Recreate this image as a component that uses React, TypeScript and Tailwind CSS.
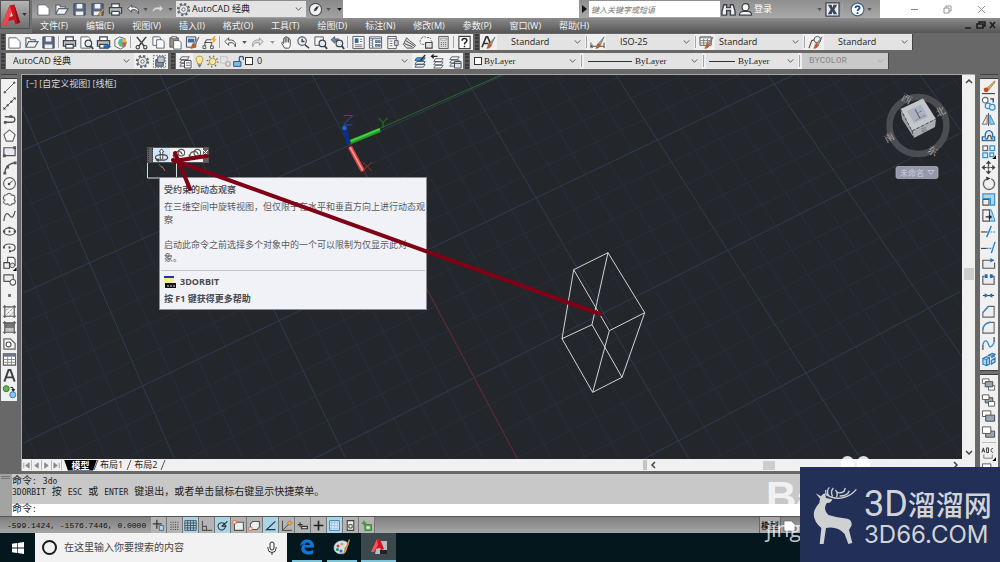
import React from "react";

const ui = "font-['Open_Sans','Noto_Sans_CJK_SC',sans-serif]";

/* ---------- icon drawings, all on a 16 x 16 grid ---------- */
const page = <path d="M2 3h8l4 4v7H2z" fill="#fff" stroke="#59616b" />;
const sheets = (
  <>
    <path d="M2 2h7l1 1v8H2z" fill="#fff" stroke="#59616b" />
    <path d="M6 5h6l2 2v7H6z" fill="#fff" stroke="#59616b" />
  </>
);
const printer = (
  <>
    <path d="M4 6V2h8v4" fill="#fff" stroke="#3d444c" strokeWidth="1.3" />
    <path d="M1.500 6h13v6h-13z" fill="#b8bdc3" stroke="#3d444c" strokeWidth="1.300" />
    <path d="M4 10h8v4H4z" fill="#fff" stroke="#3d444c" strokeWidth="1.300" />
  </>
);
const lens = (
  <>
    <circle cx="10" cy="9" r="3.500" fill="#dfeaf2" stroke="#3d444c" strokeWidth="1.300" />
    <path d="M12.500 11.500 15 15" stroke="#3d444c" strokeWidth="2" />
  </>
);
const disk = (
  <>
    <path d="M2 2h12v12H2z" fill="#5b6a80" stroke="#3a4558" />
    <path d="M5 2h6v5H5zM4 10h8v4H4z" fill="#eef1f5" />
  </>
);
const layers = (
  <>
    <path d="M5 3h8l-2 3H3zM5 6.500h8l-2 3H3zM5 10h8l-2 3H3z" fill="#f4f6f8" stroke="#555c66" />
  </>
);
const brush = (
  <>
    <path d="M15 2 9 9l2 2z" fill="#a7a29a" stroke="#555" strokeWidth=".6" />
    <path d="M9 8.500 11.500 11c-1 3-4 4-6 3.500 2-1.500 1-4.500 3.500-6z" fill="#b9602a" />
  </>
);
const gear = (
  <>
    <circle cx="8" cy="8" r="6" fill="none" stroke="#5f666e" strokeWidth="2.200" strokeDasharray="2.400 2.300" />
    <circle cx="8" cy="8" r="4.700" fill="#e9ebed" stroke="#5f666e" />
    <circle cx="8" cy="8" r="1.800" fill="#fff" stroke="#5f666e" />
  </>
);
const undo = <path d="M6 3 2 7l4 4V8.500c4-1 6 0 7 4 1.500-5-2-8-7-7z" fill="#f3f3f3" stroke="#444b53" />;
const redo = <path d="M10 3l4 4-4 4V8.500c-4-1-6 0-7 4-1.500-5 2-8 7-7z" fill="#ddd" stroke="#9a9a9a" />;
const folder = (
  <path d="M2 13V3h4l1 2h5v2M2 13 5 7h10l-3.500 6z" fill="#f1f3f5" stroke="#59616b" strokeWidth="1.200" />
);
const sq = (x: number, y: number, c: string, f = "#f3f5f7", s = 5) => (
  <rect x={x} y={y} width={s} height={s} fill={f} stroke={c} strokeWidth="1.300" />
);

const icons: Record<string, React.ReactNode> = {
  page,
  folder,
  disk,
  saveAs: <>{disk}<path d="M14 7 9 13l-1 2 2-1 5-6z" fill="#f0a040" stroke="#8a5a20" strokeWidth=".7" /></>,
  printer,
  preview: <><path d="M2 2h8l2 2v10H2z" fill="#fff" stroke="#59616b" />{lens}</>,
  publish: <>{printer}<path d="M8 11h4V9l4 3.500-4 3V14H8z" fill="#1a66b8" /></>,
  globe: <><path d="M2 5l5-3 6 2v8l-5 3-6-3z" fill="#f5f5f5" stroke="#666" /><circle cx="10" cy="8" r="4.500" fill="#48b7d0" /><path d="M10 3.500A4.500 4.500 0 0 1 14.500 8H10z" fill="#f0b43a" /><path d="M10 8h4.500A4.500 4.500 0 0 1 10 12.500z" fill="#d9534f" /><path d="M10 8v4.500A4.500 4.500 0 0 1 5.500 8z" fill="#6bbf59" /></>,
  cut: <><path d="M3 2l8 10M13 2 5 12" stroke="#444" strokeWidth="1.600" /><circle cx="4" cy="13" r="1.800" fill="none" stroke="#444" strokeWidth="1.200" /><circle cx="12" cy="13" r="1.800" fill="none" stroke="#444" strokeWidth="1.200" /></>,
  copy: sheets,
  paste: <><path d="M2 3h9v10H2z" fill="#9b8f7e" stroke="#555" /><path d="M4 1.500h5v2.500H4z" fill="#ccc" stroke="#555" strokeWidth=".7" /><path d="M6 6h6l2 2v7H6z" fill="#fff" stroke="#59616b" /></>,
  match: <><path d="M1.500 2h10v11h-10z" fill="#e9eef5" stroke="#445" /><path d="M3 4h7v4H3z" fill="#3c6cb0" />{brush}</>,
  blockEdit: <><path d="M3 13V8h8M3 8l2-3h5" fill="none" stroke="#555" strokeWidth="1.200" /><path d="M1 11.500h3v3H1zM9 11.500h3v3H9zM10 8v4" fill="#f3f3f3" stroke="#555" /><path d="M13 1l-3.500 4.500H12L10.500 10 15.500 4.500H13L14.500 1z" fill="#f2a422" /></>,
  undo,
  redo,
  hand: <path d="M5 14 2 9c-.5-1.500 1-1.500 2 0V4c0-1.500 1.500-1.500 1.600 0V2.600c.2-1.300 1.600-1.300 1.800 0V3c.3-1 1.600-1 1.800.4v1c.4-.8 1.600-.6 1.700.5L11 10c0 2-.5 3-1.500 4zM5.600 4v4M7.400 3v5M9.200 4v4" fill="#fff" stroke="#444" transform="translate(1 0)" />,
  zoomRt: <><circle cx="6.500" cy="6.500" r="4.500" fill="#e8eef4" stroke="#59616b" strokeWidth="1.300" /><path d="M6.500 4v3H9M9.500 10.500 14 14" fill="none" stroke="#444" strokeWidth="1.500" /></>,
  zoomWin: <><path d="M2 2h9v9H2z" fill="#f5f5f5" stroke="#555" />{lens}</>,
  zoomPrev: <><path d="M1 5l4-3.500V4h4v3H5v2z" fill="#6e86a5" stroke="#445" strokeWidth=".6" />{lens}</>,
  props: <><path d="M2 1.500h12v13H2z" fill="#fff" stroke="#555" /><path d="M4 3.500h4v5H4z" fill="#3466a8" /><path d="M9.500 4.500H12M9.500 7H12M4 10.500h8M4 12.500h8" stroke="#667" /></>,
  dc: <><path d="M1.500 2h13v12h-13z" fill="#fff" stroke="#555" /><path d="M1.500 4h13M5 4v10M8 6h2v2H8zM11 6h2v2h-2zM8 10h2v2H8zM11 10h2v2h-2zM2.500 6h1.500M2.500 8.500h1.500M2.500 11h1.500" stroke="#4d6280" fill="#9db3cf" /></>,
  palettes: <><path d="M3 1.500h9v13H3z" fill="#fff" stroke="#555" /><path d="M3 4h9M5 6.500h3M5 9h3M5 11.500h3" stroke="#667" /><path d="M10 6h4v5h-4z" fill="#c9d0d8" stroke="#556" /></>,
  sheetset: <><path d="M1.500 10 5 3l3 3 6.500 5-2.500 3H5z" fill="#d9dbdd" stroke="#555" /><path d="M2 9l9 3.500M4 6l9 5.500" stroke="#555" /></>,
  markup: <><path d="M3 3c2-2 4-1 5 0 3-1 5 0 5 3 2 2 0 4-1 4H3C0 9 1 5 3 3z" fill="#f3f3f3" stroke="#666" strokeDasharray="2 1" /><path d="M7 8h7v6H7z" fill="#dfe3e8" stroke="#445" strokeWidth="1.200" /></>,
  calc: <><path d="M3 1.500h10v13H3z" fill="#e3e3e3" stroke="#555" /><path d="M5 3.500h6v2H5z" fill="#fff" stroke="#777" strokeWidth=".7" /><path d="M5 8h6M5 10h6M5 12h6" stroke="#777" strokeDasharray="1.400 .9" strokeWidth="1.300" /></>,
  help: <><path d="M2 1.500h12v13H2z" fill="#fff" stroke="#444" strokeWidth="1.200" /><path d="M5.500 6c0-3 5-3 5 0 0 1.700-2.500 1.700-2.500 4M8 11.500v1.500" fill="none" stroke="#222" strokeWidth="1.600" /></>,
  textStyle: <><path d="M1 13 5.500 2h1.500L10 9M3 9h5" fill="none" stroke="#333" strokeWidth="1.700" />{brush}</>,
  dimStyle: <><path d="M1 8v6M15 8v6M1 12h14M3 10.500 1 12l2 1.500" stroke="#444" fill="none" />{brush}</>,
  tableStyle: <><path d="M1 2h12v9H1z" fill="#fff" stroke="#555" /><path d="M1 3h12M1 6h12M1 8.500h12M5 4v7M9 4v7" stroke="#777" />{brush}</>,
  leaderStyle: <><path d="M1 14 4 6l8-3" fill="none" stroke="#444" strokeWidth="1.200" /><circle cx="10" cy="5" r="3.500" fill="#eee" stroke="#555" />{brush}</>,
  gear,
  wsSave: <><path d="M1.500 1.500h13v13h-13z" fill="none" stroke="#666" strokeDasharray="1.500 1.500" /><path d="M4 6h8v7H4z" fill="#7f8fa6" stroke="#445" /><path d="M6 3h7v6H6z" fill="#b9c3d2" stroke="#556" /></>,
  layerProps: <>{layers}<path d="M8 7h7v8H8z" fill="#fff" stroke="#445" /><path d="M9.500 9.500H14M9.500 12H14" stroke="#667" /></>,
  bulb: <><path d="M8 1.500c5 0 5 5 2.500 7.500V11h-5V9C3 6.500 3 1.500 8 1.500z" fill="#ffe79a" stroke="#a08434" /><path d="M6 12.500h4M7 14.500h2" stroke="#555" strokeWidth="1.400" /></>,
  sun: <><circle cx="8" cy="8" r="6.300" fill="none" stroke="#7a6a3a" strokeWidth="2" strokeDasharray="1.500 3.450" /><circle cx="8" cy="8" r="4" fill="#ffe79a" stroke="#97813d" /></>,
  vpFreeze: <><path d="M2 2h8v8H2z" fill="#e6e6e6" stroke="#bbb" /><circle cx="11" cy="11" r="3" fill="#ddd" stroke="#b0b0b0" strokeWidth="1.500" /></>,
  lock: <><path d="M2 8h9v6H2z" fill="#7db7e2" stroke="#2c587e" strokeWidth="1.200" /><path d="M9 8V4c0-3 5-3 5 0v2" fill="none" stroke="#2c587e" strokeWidth="1.500" /></>,
  layerCur: <><path d="M4 4h9l-2 3H2z" fill="#4b9bd8" stroke="#245a8a" /><path d="M4 8h9l-2 3H2zM4 11h9l-2 3H2z" fill="#eaf1f7" stroke="#4a5a6a" /><path d="M13 1 8 7" stroke="#333" strokeWidth="1.500" /></>,
  layerPrev: <><path d="M6 5h8l-2 3H4zM6 8.500h8l-2 3H4zM6 12h8l-2 3H4z" fill="#fff" stroke="#555c66" /><path d="M8 2.500H2M4 .5 1.500 2.500 4 4.500" fill="none" stroke="#222" strokeWidth="1.300" /></>,
  layerState: <>{layers}<path d="M8 8h7v7H8z" fill="#dfe5ea" stroke="#445" /><path d="M8 10h7" stroke="#445" /></>,
  compass: <><circle cx="8" cy="8" r="6.500" fill="#f2f2f2" stroke="#4e565e" strokeWidth="1.300" /><path d="M12 4 7 7l-1 3 3-1z" fill="#3d444c" /><path d="M8 8l2-3" stroke="#333" strokeWidth="1.500" /></>,
  binoc: <path d="M3 3h3v3h4V3h3l2 7v4H10V9H6v5H1v-4z" fill="#f0f0f0" stroke="#3c434b" strokeWidth="1.500" />,
  user: <><circle cx="8" cy="5.500" r="3.700" fill="#f6f6f6" stroke="#39414c" strokeWidth="1.300" /><path d="M1.500 14c0-3 3-4 4.500-4h4c2 0 4.500 1 4.500 4z" fill="#f6f6f6" stroke="#39414c" strokeWidth="1.300" /></>,
  exchange: <><path d="M1 1h14v14H1z" fill="#e8ebef" stroke="#3d4654" strokeWidth="1.400" /><path d="M3 3h4l1 3 1-3h4l-3 5 3 5H9l-1-3-1 3H3l3-5z" fill="#3b4658" /></>,
  helpBall: <><circle cx="8" cy="8" r="6.800" fill="#f8fafc" stroke="#44638c" strokeWidth="1.200" /><path d="M5.800 6.500c0-3 4.500-2.800 4.500-.3 0 1.700-2.200 1.500-2.200 3.500M8 11v1.700" fill="none" stroke="#1d4f9c" strokeWidth="1.900" /></>,
  /* draw toolbar */
  line: <><path d="M3 13 13 3" stroke="#555" /><circle cx="3" cy="13" r="1.300" fill="#667" /><circle cx="13" cy="3" r="1.300" fill="#667" /></>,
  xline: <><path d="M2 14 14 2" stroke="#555" /><path d="M1.500 14.500v-3l3 3zM14.500 1.500v3l-3-3z" fill="#333" /><circle cx="6" cy="10" r="1.200" fill="#444" /><circle cx="10" cy="6" r="1.200" fill="#444" /></>,
  pline: <><path d="M3 5h7c5 0 5 6 0 6H3" fill="none" stroke="#555" strokeWidth="1.500" /><path d="M2 9.500h3v3H2zM8 3.500h3v3H8z" fill="#555" /></>,
  polygon: <path d="M8 2l6 5-2.500 7h-7L2 7z" fill="#f5f6f7" stroke="#666" strokeWidth="1.200" />,
  rect: <><path d="M2 4h12v8.500H2z" fill="#e7e9ec" stroke="#555" strokeWidth="1.300" /><path d="M12 2.500h3v3h-3zM1 11h3v3H1z" fill="#555" /></>,
  arc: <><path d="M3 14C3 8 7 3.500 14 3" fill="none" stroke="#555" strokeWidth="1.300" /><path d="M1.500 12.500h3v3h-3zM4.500 6h3v3h-3zM12.500 1.500h3v3h-3z" fill="#555" /></>,
  circle: <><circle cx="8" cy="8" r="6.300" fill="#f5f6f7" stroke="#666" strokeWidth="1.300" /><circle cx="7.500" cy="8.500" r="1.400" fill="#444" /><path d="M7.500 8.500 11.500 5" stroke="#444" /></>,
  cloud: <path d="M5 3c2-2.500 5-1.500 5 .5 3-1 5 2 3 4.500 2.500 2 0 5.500-2.500 4.500-1 2.500-4 2-4.500 0C3 14 0 11 3 8.500 0 7 2 2.500 5 3z" fill="#f5f6f7" stroke="#666" strokeWidth="1.200" />,
  spline: <path d="M2 14C3 4 6 5 8 8s4 3 6-5" fill="none" stroke="#555" strokeWidth="1.300" />,
  ellipse: <><ellipse cx="8" cy="8" rx="6" ry="3.800" fill="#f5f6f7" stroke="#555" strokeWidth="1.300" /><path d="M7 3h2v2H7zM7 7h2v2H7zM1 7h2.500v2H1zM12.500 7H15v2h-2.500z" fill="#444" /></>,
  ellArc: <><path d="M2 8c0-5 12-5 12 0 0 3-3 4-5.500 4" fill="none" stroke="#555" strokeWidth="1.300" /><path d="M1 7h2v2H1zM7 7h2v2H7zM7.500 11h2v2h-2z" fill="#444" /></>,
  insert: <><path d="M6 1.500h6l2 2V10H6z" fill="#fff" stroke="#555" strokeWidth="1.200" /><path d="M2 7h6v6H2z" fill="#eceef0" stroke="#444" strokeWidth="1.200" /><circle cx="11" cy="10" r="2.500" fill="#ddd" stroke="#555" /><path d="M15.500 12v4h-4z" fill="#000" /></>,
  block: <><path d="M2 3h10v7H2z" fill="#eceef0" stroke="#555" strokeWidth="1.200" /><circle cx="11.500" cy="11" r="3" fill="#fff" stroke="#555" strokeWidth="1.200" /></>,
  point: <path d="M6.500 6.500h3v3h-3z" fill="#666" />,
  hatch: <><path d="M3 1v14M13 1v14M1 3h14M1 13h14" stroke="#555" strokeWidth="1.200" /><path d="M3 8l5-5M3 13 13 3M8 13l5-5" stroke="#777" strokeDasharray="1.500 1" /></>,
  gradient: <><path d="M3 3h10v6H3z" fill="#777" /><path d="M3 9h10v4H3z" fill="#c2c6ca" /><path d="M3 1v14M13 1v14M1 3h14M1 13h14" stroke="#555" strokeWidth="1.200" /></>,
  region: <><path d="M2 3h7l5 5v6H2z" fill="#eef0f2" stroke="#666" strokeWidth="1.300" /><circle cx="7" cy="9" r="2.600" fill="#fff" stroke="#555" strokeWidth="1.200" /></>,
  table: <><path d="M1.500 2h13v12h-13z" fill="#fff" stroke="#555" strokeWidth="1.200" /><path d="M1.500 2h13v3h-13z" fill="#66788f" /><path d="M1.500 8h13M1.500 11h13M6 5v9M10 5v9" stroke="#888" /></>,
  mtext: <path d="M2.500 14.500 7 2h2l4.500 12.500M4.500 10h7" fill="none" stroke="#3b3f44" strokeWidth="2.100" />,
  addSel: <><circle cx="4.500" cy="5" r="3.200" fill="#63b24e" stroke="#2f7a28" /><circle cx="11.500" cy="11.500" r="3.200" fill="#8cc6ef" stroke="#3278b0" /><path d="M9 3.500c3 0 3 1 3 3.500M10.500 5.500 12 7.500l1.500-2" fill="none" stroke="#222" strokeWidth="1.200" /></>,
  /* modify toolbar */
  erase: <><path d="M14.500 1 6 9l2 2 7-9z" fill="#e1b25a" stroke="#8a6a2a" strokeWidth=".7" /><circle cx="5.500" cy="10.500" r="2.600" fill="#c9461f" /><path d="M1 14.500h14" stroke="#444" strokeWidth="1.200" /></>,
  mcopy: <><circle cx="4.500" cy="4.500" r="3" fill="#fff" stroke="#666" strokeWidth="1.200" /><circle cx="7.500" cy="10.500" r="3" fill="#e4f2fc" stroke="#3a8fd0" strokeWidth="1.300" /><circle cx="12" cy="12" r="3" fill="#e4f2fc" stroke="#3a8fd0" strokeWidth="1.300" /><path d="M10 3h3v4" fill="none" stroke="#333" strokeWidth="1.300" /></>,
  mirror: <><path d="M6.500 3v10h-5z" fill="#eee" stroke="#666" /><path d="M9.500 3v10h5z" fill="#9fd0f3" stroke="#2f86c8" /><path d="M8 1v14" stroke="#555" /></>,
  offset: <><path d="M1.500 13.500v-4h3c-1-9 9-9 8 0h2v4z" fill="#dcebf7" stroke="#2f6fa8" strokeWidth="1.500" /><path d="M4 11.500h3c0-5 4-5 4 0h2" fill="none" stroke="#555" strokeWidth="1.300" /></>,
  array: <>{sq(2, 2, "#666")}{sq(9.500, 2, "#3a8fd0", "#d8ecfa")}{sq(2, 9.500, "#3a8fd0", "#d8ecfa")}{sq(9.500, 9.500, "#3a8fd0", "#d8ecfa", 4)}<path d="M16 12v4h-4z" fill="#000" /></>,
  move: <><path d="M8 2v12M2 8h12" stroke="#444" strokeWidth="1.300" strokeDasharray="4 4" /><path d="M8 .5 11 4H5zM8 15.500 5 12h6zM.5 8 4 5v6zM15.500 8 12 11V5z" fill="#444" /><circle cx="8" cy="8" r="1.300" fill="#444" /></>,
  rotate: <><path d="M11 3a6 6 0 1 1-5 0" fill="none" stroke="#666" strokeWidth="1.500" /><path d="M5.500 .5 10 2.500 6 5z" fill="#333" /></>,
  scale: <><path d="M2 2h12.500v12H10V7H2z" fill="#a7d6f5" stroke="#3a8fd0" strokeWidth="1.200" /><path d="M2 8h6.500v6H2z" fill="#eee" stroke="#555" strokeWidth="1.200" /></>,
  stretch: <><path d="M9 2h2l4 12H9z" fill="#a7d6f5" stroke="#3a8fd0" /><path d="M2 2h7v12H2z" fill="#f1f1f1" stroke="#555" strokeWidth="1.200" /><path d="M5 9.500h5M8.500 7.500l2.500 2-2.500 2" fill="none" stroke="#222" strokeWidth="1.200" /></>,
  trim: <><path d="M0 8.500h7" stroke="#444" strokeWidth="1.200" /><path d="M10 8.500h6" stroke="#3a8fd0" strokeDasharray="2 1" strokeWidth="1.200" /><path d="M6 14l5-12" stroke="#2f7fc4" strokeWidth="1.500" /></>,
  extend: <><path d="M0 9h6" stroke="#444" strokeWidth="1.200" /><path d="M6 9h5" stroke="#2f7fc4" strokeDasharray="2 1" strokeWidth="1.400" /><path d="M11 14l4-12" stroke="#2f7fc4" strokeWidth="1.500" /></>,
  breakPt: <><path d="M14 4.500H2V13h12.500V7" fill="#e9ebee" stroke="#555" strokeWidth="1.200" /><path d="M10 2l4 2.500L10 7z" fill="#1f6cb4" /></>,
  brk: <><path d="M4 4.500H2V13h12V4.500h-2" fill="#e9ebee" stroke="#555" strokeWidth="1.200" /><path d="M4 2.500h3v4H4zM9.500 2.500h3v4h-3z" fill="#1f6cb4" /></>,
  join: <><path d="M2 8h12" stroke="#444" strokeWidth="1.200" /><path d="M4 5.500l4 2.500-4 2.500zM12 5.500 8 8l4 2.500z" fill="#1f6cb4" /></>,
  chamfer: <><path d="M8 2.500h6V14H2V9z" fill="#eceef0" stroke="#666" strokeWidth="1.200" /><path d="M2 9l6-6.500" stroke="#3a8fd0" strokeWidth="1.600" /></>,
  fillet: <><path d="M10 2.500h4V14H2v-4c0-4 4-7.500 8-7.500z" fill="#eceef0" stroke="#666" strokeWidth="1.200" /><path d="M2 10c0-4 4-7.500 8-7.500" fill="none" stroke="#3a8fd0" strokeWidth="1.600" /></>,
  blend: <><path d="M2 15V9M14 1v6" stroke="#666" strokeWidth="1.600" /><path d="M2 9c2-6 5-4 6 0s4 3 6-2" fill="none" stroke="#3a8fd0" strokeWidth="1.500" /></>,
  explode: <><path d="M2 7l4-2 3 1v7l-3 1.500L2 13zM2 7l4 1 3-2M6 8v6" fill="#a7d6f5" stroke="#2a78b8" strokeWidth="1.200" /><path d="M8 3.500l4-2 3 1-4 2zM11 9l4-2.500v4L11 13zM11 6l4-2" fill="#a7d6f5" stroke="#2a78b8" strokeWidth="1.200" /></>,
  front: <><path d="M1.500 2h7v5h-7zM8 9h6.500v5H8z" fill="#fff" stroke="#666" /><path d="M4.500 5h8v5.500h-8z" fill="#9aa6b4" stroke="#444" /></>,
  back: <><path d="M4.500 5h8v5.500h-8z" fill="#9aa6b4" stroke="#444" /><path d="M1.500 2h7v5h-7zM8 9h6.500v5H8z" fill="#fff" stroke="#555" /></>,
  above: <><path d="M1.500 2h9v6h-9z" fill="#fff" stroke="#555" /><path d="M5 6.500h9.500V13H5z" fill="#9aa6b4" stroke="#444" /></>,
  under: <><path d="M5 6.500h9.500V13H5z" fill="#9aa6b4" stroke="#444" /><path d="M1.500 2h9v7h-9z" fill="#fff" stroke="#555" /></>,
  annot: <><path d="M1 7l1.500-5L4 7M1.500 5h2M6 2v5h2V2zM13 3c-3-2-3 5 0 3.500" fill="none" stroke="#333" /><path d="M3 9v4h9V9" fill="none" stroke="#777" /><path d="M16 12v4h-4z" fill="#000" /></>,
  /* status bar */
  infer: <><path d="M6 1v11M1 6h11" stroke="#333" strokeWidth="1.500" /><path d="M9 8h5v6H9z" fill="#b9d2ea" stroke="#345f92" /></>,
  snap: <path d="M3 4h10M3 7h10M3 10h10M3 13h10" stroke="#444" strokeWidth="1.300" strokeDasharray="1.300 1.500" />,
  grid: <path d="M1 2h14v12H1zM1 5h14M1 8h14M1 11h14M4.500 2v12M8 2v12M11.500 2v12" fill="none" stroke="#37444f" />,
  ortho: <path d="M3 2v12h12M3 9h5v5" fill="none" stroke="#555" strokeWidth="1.400" />,
  polar: <><circle cx="7" cy="9" r="4.500" fill="none" stroke="#333" strokeWidth="1.300" /><path d="M7 9h6M7 9l7-6" stroke="#222" strokeWidth="1.300" /></>,
  osnap: <><path d="M3 4h11v10H3z" fill="#eceff2" stroke="#555" strokeWidth="1.300" /><path d="M1 2h4v4H1z" fill="#ffdfcf" stroke="#e0714a" /></>,
  osnap3: <><path d="M3 6l3-3h8v7l-3 3H3z" fill="#eceff2" stroke="#555" strokeWidth="1.300" /><path d="M1 10h4v4H1z" fill="#ffdfcf" stroke="#e0714a" /></>,
  otrack: <path d="M14 3 3 13h11" fill="none" stroke="#234" strokeWidth="1.400" />,
  ducs: <><path d="M3 2v12h12M3 14 12 5" fill="none" stroke="#444" strokeWidth="1.200" /><path d="M9 5l3-3 3 3-3 3z" fill="#f0a53c" stroke="#a8681c" strokeWidth=".7" /></>,
  dyn: <path d="M2 7h6M5 4v6M7 9h7v3H7z" fill="#ddd" stroke="#333" strokeWidth="1.400" />,
  lwt: <path d="M8 2v12M2 8h12" stroke="#222" strokeWidth="2" />,
  tpy: <><path d="M2 2h12v12H2z" fill="#d9ecfb" stroke="#3b82bd" strokeWidth="1.200" /><path d="M3 4.500h10M3 8h10M3 11.500h10M4.500 3v10M8 3v10M11.500 3v10" stroke="#75b0de" strokeDasharray="1.500 1" /></>,
  qp: <><path d="M4 2h8v12H4z" fill="#eee" stroke="#444" strokeWidth="1.300" /><path d="M6 7h4v4H6z" fill="#fff" stroke="#444" strokeWidth="1.200" /></>,
  sc: <><path d="M2 5h6M5 2v6" stroke="#3f8f35" strokeWidth="1.600" /><path d="M6 7h8v7H6z" fill="#6fb561" stroke="#2d6a2a" /><path d="M8 9h4v3H8z" fill="#d9efd4" /></>,
  orbit: <><path d="M8 1 5.500 4h1.200v8h2.600V4h1.200z" fill="#fff" stroke="#444" /><ellipse cx="8" cy="10" rx="6.500" ry="3" fill="none" stroke="#444" strokeWidth="1.200" /><path d="M5 11v4l-3-2z" fill="#444" /></>,
  orbitFree: <><circle cx="11" cy="5" r="3.500" fill="#fff" stroke="#555" strokeWidth="1.200" /><path d="M3 9c0-6 8-7 9-2M2 7l1 3 3-1" fill="none" stroke="#555" strokeWidth="1.200" /></>,
};

function Icon({ name, size = "size-[15px]" }: { name: string; size?: string }) {
  return (
    <svg viewBox="0 0 16 16" className={`${size} shrink-0`} aria-hidden="true">
      {icons[name]}
    </svg>
  );
}

function Tool({ name, cls = "h-4 w-[17px]" }: { name: string; cls?: string }) {
  return (
    <button aria-label={name} className={`flex shrink-0 items-center justify-center ${cls}`}>
      <Icon name={name} />
    </button>
  );
}

const Sep = () => <span className="mx-[1px] h-3 w-[2px] shrink-0 border-l border-[#a5a5a5]" />;
const Grip = () => <span className="mx-[1px] h-4 w-[4px] shrink-0 border-x-2 border-dotted border-[#3c3c3c] bg-[#555]" />;
const HGrip = () => <div className="h-[5px] w-full shrink-0 border-y border-[#3f3f3f] bg-[#707070]" />;
const Caret = ({ cls = "w-[10px]", fill = "#555" }: { cls?: string; fill?: string }) => (
  <span className={`flex shrink-0 justify-center ${cls}`}>
    <svg viewBox="0 0 6 4" className="h-[3px] w-[5px]"><path d="M0 0h6L3 4z" fill={fill} /></svg>
  </span>
);

function Combo({ label, value, cls, pad = "pl-1", prefix, font = "", disabled = false }: {
  label: string; value: string; cls: string; pad?: string; prefix?: React.ReactNode; font?: string; disabled?: boolean;
}) {
  return (
    <div className={`flex h-4 shrink-0 items-center pr-1 ${disabled ? "bg-[#c9c9c9]" : "bg-[#e3e3e3]"} ${cls}`}>
      {prefix}
      <select aria-label={label} disabled={disabled} className={`h-4 min-w-0 flex-1 appearance-none bg-transparent text-[9px] leading-4 outline-none ${disabled ? "text-[#888]" : "text-[#222]"} ${pad} ${font}`}>
        <option>{value}</option>
      </select>
      <svg viewBox="0 0 8 5" className="h-[4px] w-[7px] shrink-0"><path d="M.5.5 4 4 7.500.5" fill="none" stroke={disabled ? "#aaa" : "#555"} strokeWidth="1.200" /></svg>
    </div>
  );
}

/* ---------- header ---------- */
const menus = ["文件(F)", "编辑(E)", "视图(V)", "插入(I)", "格式(O)", "工具(T)", "绘图(D)", "标注(N)", "修改(M)", "参数(P)", "窗口(W)", "帮助(H)"];

function Header() {
  return (
    <header className="flex h-[33px] shrink-0 bg-[#707070]">
      <button aria-label="应用程序菜单" className="mr-[2px] flex h-[29px] w-[30px] shrink-0 items-center border border-[#555] bg-linear-to-b from-[#b5b5b5] to-[#6f6f6f]">
        <svg viewBox="0 0 22 26" className="h-[26px] w-[21px]">
          <path d="M1 23 9 3l5-1 6 19-5 2-1.500-5-6 1.500L6 24z" fill="#c51620" />
          <path d="M1 23 9 3l3 8-3 4-3 9z" fill="#f0454b" />
          <path d="m9 15 2-5 1.500 4z" fill="#fff" opacity=".85" />
          <path d="M14 2l6 19-3 1z" fill="#8d0b13" />
        </svg>
        <Caret cls="w-[5px]" fill="#333" />
      </button>
      <div className="flex min-w-0 flex-1 flex-col">
        <div className="flex h-[18px] items-stretch bg-white">
          <div className="flex w-[311px] shrink-0 items-center bg-linear-to-b from-[#8a8a8a] to-[#a2a2a2] pl-[2px]">
            {["page", "folder", "disk", "saveAs", "printer", "undo"].map((n) => <Tool key={n} name={n} cls="h-4 w-[18px]" />)}
            <Caret cls="w-[7px]" />
            <Tool name="redo" />
            <Caret cls="w-[9px]" />
            <Combo label="工作空间" value="AutoCAD 经典" cls="w-[130px] mx-px" pad="pl-px" prefix={<Icon name="gear" />} />
            <Tool name="compass" />
            <Caret cls="w-[8px]" />
            <Caret cls="w-[14px]" fill="#111" />
          </div>
          <div className="flex-1" />
          <div className="flex w-[301px] shrink-0 items-center bg-linear-to-b from-[#8f8f8f] to-[#a8a8a8]">
            <svg viewBox="0 0 10 10" className="w-[10px]"><path d="M3 1l5 4-5 4z" fill="#111" /></svg>
            <input aria-label="搜索" placeholder="键入关键字或短语" className="h-[16px] w-[131px] bg-white px-[2px] text-[8px] italic text-[#444] outline-none placeholder:text-[#777]" />
            <Tool name="binoc" />
            <Tool name="user" />
            <button className="w-[60px] text-left text-[9px] text-white">登录</button>
            <Caret />
            <Tool name="exchange" />
            <Sep />
            <span className="w-[4px]" />
            <Tool name="helpBall" />
            <Caret cls="w-[7px]" />
          </div>
          <div className="flex w-[120px] shrink-0 items-center justify-between pr-[14px] pl-[31px]">
            <button aria-label="最小化" className="h-px w-[7px] bg-[#888]" />
            <button aria-label="还原"><svg viewBox="0 0 9 9" className="w-[9px]"><path d="M1 3h5v5H1zM3 3V1h5v5H6" fill="none" stroke="#888" strokeWidth=".9" /></svg></button>
            <button aria-label="关闭"><svg viewBox="0 0 9 9" className="w-[9px]"><path d="M1 1l7 7M8 1 1 8" stroke="#888" strokeWidth=".9" /></svg></button>
          </div>
        </div>
        <div className="flex h-[15px] items-center bg-linear-to-b from-[#8b8b8b] to-[#565656] pr-[4px]">
          <nav className="flex flex-1 gap-[18px] pl-2 text-[9px] leading-[15px] whitespace-nowrap text-[#f2f2f2]">
            {menus.map((m) => <a key={m} href="#menu">{m}</a>)}
          </nav>
          <svg viewBox="0 0 32 9" className="w-[32px]">
            <path d="M1 7h6M13 3h6v4h-6zM15 3V1h6v4h-2M26 1l5 6M31 1l-5 6" fill="none" stroke="#1e1e1e" strokeWidth="1.600" />
          </svg>
        </div>
      </div>
    </header>
  );
}

function Toolbars() {
  const serif = "font-['Liberation_Serif',serif]";
  return (
    <div className="flex shrink-0 flex-col gap-[3px] pt-px pb-[5px]">
      <div className="flex h-4">
        <Grip />
        <div className="flex items-center bg-[#f0f0f0]">
          {["page", "folder", "disk"].map((n) => <Tool key={n} name={n} />)}
          <Sep />
          {["printer", "preview", "publish", "globe"].map((n) => <Tool key={n} name={n} />)}
          <Sep />
          {["cut", "copy", "paste", "match", "blockEdit"].map((n) => <Tool key={n} name={n} />)}
          <Sep />
          <Tool name="undo" /><Caret /><Tool name="redo" /><Caret cls="w-3" fill="#999" />
          {["hand", "zoomRt", "zoomWin", "zoomPrev"].map((n) => <Tool key={n} name={n} />)}
          <Sep />
          {["props", "dc", "palettes", "sheetset", "markup", "calc"].map((n) => <Tool key={n} name={n} />)}
          <Sep />
          <Tool name="help" />
        </div>
        <span className="w-px" />
        <Grip />
        <div className="flex items-center border-r border-[#444] bg-[#f0f0f0]">
          <Tool name="textStyle" /><Combo label="文字样式" value="Standard" cls="w-[88px]" pad="pl-[14px]" />
          <Sep /><Tool name="dimStyle" /><Combo label="标注样式" value="ISO-25" cls="w-[88px]" pad="pl-[14px]" />
          <Sep /><Tool name="tableStyle" /><Combo label="表格样式" value="Standard" cls="w-[88px]" pad="pl-1" />
          <Sep /><Tool name="leaderStyle" /><Combo label="多重引线样式" value="Standard" cls="w-[88px]" pad="pl-[14px]" />
        </div>
      </div>
      <div className="flex h-4">
        <Grip />
        <div className="flex bg-[#f0f0f0]">
          <Combo label="工作空间切换" value="AutoCAD 经典" cls="w-[128px]" pad="pl-[7px]" />
          <Tool name="gear" /><Tool name="wsSave" />
        </div>
        <span className="w-[2px]" />
        <Grip />
        <div className="flex bg-[#f0f0f0]">
          <Tool name="layerProps" />
          <Combo label="图层" value="0" cls="w-[219px]" pad="pl-1" prefix={
            <span className="flex items-center">
              <Icon name="bulb" size="size-[13px]" /><Icon name="sun" size="size-[13px]" /><Icon name="vpFreeze" size="size-[13px]" /><Icon name="lock" size="size-[13px]" />
              <span className="size-[8px] border border-[#333] bg-white" />
            </span>
          } />
          <Tool name="layerCur" /><Tool name="layerPrev" /><Tool name="layerState" />
        </div>
        <span className="w-px" />
        <Grip />
        <div className="flex items-center border-r border-[#444] bg-[#f0f0f0]">
          <Combo label="颜色" value="ByLayer" cls="w-[110px]" pad="pl-[2px]" font={serif} prefix={<span className="ml-1 size-[8px] border border-[#333] bg-white" />} />
          <Sep />
          <Combo label="线型" value="ByLayer" cls="w-[118px]" pad="pl-[3px]" font={serif} prefix={<span className="ml-1 h-px w-[44px] bg-[#333]" />} />
          <Sep />
          <Combo label="线宽" value="ByLayer" cls="w-[92px]" pad="pl-[3px]" font={serif} prefix={<span className="ml-[3px] h-px w-[26px] bg-[#333]" />} />
          <Sep />
          <Combo label="打印样式" value="BYCOLOR" cls="w-[86px]" pad="pl-[7px]" font="font-['Liberation_Mono',monospace] text-[7px]" disabled />
        </div>
      </div>
    </div>
  );
}

/* ---------- drawing area ---------- */
const rowsL = [12, 150, 293, 443, 605, 788, 990];
const rowsR = [-380, -250, -132, -5, 133, 291, 470];

function Scene() {
  const minor: React.ReactNode[] = [];
  const major: React.ReactNode[] = [];
  for (let i = 0; i < rowsL.length - 1; i++) {
    for (let k = 0; k < 5; k++) {
      const l = rowsL[i] + ((rowsL[i + 1] - rowsL[i]) * k) / 5;
      const r = rowsR[i] + ((rowsR[i + 1] - rowsR[i]) * k) / 5;
      (k === 0 ? major : minor).push(<line key={`r${i}-${k}`} x1={23} y1={l} x2={961} y2={r} />);
    }
  }
  for (let i = -10; i < 36; i++) {
    (i % 5 === 0 ? major : minor).push(<line key={`c${i}`} x1={8 + i * 30.4} y1={75} x2={174 + i * 34.3} y2={458} />);
  }
  return (
    <svg viewBox="22 75 940 384" preserveAspectRatio="xMinYMin slice" className="size-full" aria-label="图形">
      <g stroke="#2a2e35">{minor}</g>
      <g stroke="#333950">{major}</g>
      <path d="M349 142 501 75" stroke="#246b27" />
      <path d="M349 142 517 458" stroke="#6b2428" />
      <path d="M350 142 380 130" stroke="#22a222" strokeWidth="4.500" />
      <path d="M351 141 380 129" stroke="#4fd04a" strokeWidth="1.500" />
      <path d="M344.500 127 348.500 144" stroke="#0b2f86" strokeWidth="4.500" />
      <circle cx="344.500" cy="128" r="2.300" fill="#2563d8" />
      <path d="M350 147 363 171" stroke="#e04545" strokeWidth="4.500" />
      <path d="M350 147 363 171" stroke="#ffa0a0" strokeWidth="1.500" />
      <g fill="none" strokeWidth="1">
        <path d="M343.500 115.500h9l-9 9.500h9" stroke="#2050b8" />
        <path d="M378.500 118l4.500 4.500 4.500-4.500M383 122.500v5" stroke="#208a20" />
        <path d="M362.500 162l9.500 9M372 162l-9.500 9" stroke="#a02c2c" />
      </g>
      <g fill="none" stroke="#e6e6e6" strokeWidth=".9">
        <path d="M573.700 269.700 608 252.700 644.700 312.700 609.300 330.700z" />
        <path d="M562 338.700 592 324.700 622 377.300 592.700 392.300z" />
        <path d="M573.700 269.700 562 338.700M608 252.700 592 324.700M644.700 312.700 622 377.300M609.300 330.700 592.700 392.300" />
      </g>
      <path d="M147.500 160v18h29v-18" fill="none" stroke="#d8d8d8" />
      <path d="M159 164l3 4" stroke="#4c8a4c" /><path d="M162 166l3 5" stroke="#c06a5a" />
    </svg>
  );
}

function ViewCube() {
  return (
    <svg viewBox="880 88 76 94" className="absolute top-[13px] right-[6px] h-[94px] w-[76px]" aria-label="ViewCube">
      <circle cx="918" cy="125.500" r="28.500" fill="none" stroke="#4a4d51" strokeWidth="6.500" />
      <path d="M900.500 109 923 98.500 936 119 912 131z" fill="#c3c6ca" />
      <path d="M900.500 109 912 131 914 138 902 119z" fill="#9b9ea3" />
      <path d="M912 131 936 119 935 127 914 138z" fill="#aaadb1" />
      <path d="M900.500 109 912 131 936 119M912 131l2 7" fill="none" stroke="#4b4e53" strokeDasharray="3 2" />
      <path d="M907 111 921 104.500 928 117 914 123z" fill="#aab2bf" />
      <g fill="#b4b7bb" fontSize="10" textAnchor="middle" className="font-['Noto_Serif_CJK_SC','Noto_Sans_CJK_SC',serif]">
        <text transform="translate(905 102) rotate(28)">西</text>
        <text transform="translate(942 115) rotate(-28)">北</text>
        <text transform="translate(891 141) rotate(-28)">南</text>
        <text transform="translate(931 154) rotate(28)">东</text>
        <text transform="translate(920 118) rotate(-28)" fill="#50555c" fontSize="12">上</text>
        <text transform="translate(925 132) rotate(-27)" fill="#55595e" fontSize="6">前</text>
      </g>
      <rect x="896" y="166.500" width="42" height="12" rx="2" fill="#9598a8" stroke="#b4b6c2" strokeWidth=".7" />
      <text x="900" y="175.500" fontSize="8" fill="#cdd0da" className="font-['Noto_Sans_CJK_SC',sans-serif]">未命名</text>
      <path d="M928 170.500h6l-3 4z" fill="none" stroke="#cdd0da" strokeWidth=".8" />
    </svg>
  );
}

function OrbitBar() {
  return (
    <div className="absolute top-[72px] left-[125px] flex h-[16px] border border-[#555] bg-[#f0f0f0]">
      <span className="w-[5px] border-x border-dotted border-[#333] bg-[#606060]" />
      <Tool name="orbit" cls="w-[17px] h-[14px] bg-[#d3e6f6]" />
      <Tool name="orbitFree" cls="w-[16px] h-[14px]" />
      <Tool name="orbitFree" cls="w-[17px] h-[14px]" />
      <button aria-label="关闭工具栏" className="flex w-[5px] bg-[#606060] pt-[2px]">
        <svg viewBox="0 0 5 5" className="size-[5px]"><path d="M0 0l5 5M5 0 0 5" stroke="#fff" /></svg>
      </button>
    </div>
  );
}

function Tooltip() {
  return (
    <div role="tooltip" className="absolute top-[102px] left-[137px] w-[268px] border border-[#8b8d92] bg-[#f1f2f7] pt-[5px] pb-[4px] text-[9px] leading-[13px] whitespace-nowrap text-[#5a5a5e]">
      <p className="pl-1 font-medium text-[#444]">受约束的动态观察</p>
      <p className="mt-1 pl-1">在三维空间中旋转视图，但仅限于在水平和垂直方向上进行动态观<br />察</p>
      <p className="mt-3 pl-1">启动此命令之前选择多个对象中的一个可以限制为仅显示此对<br />象。</p>
      <div className="mx-px mt-[6px] border-t border-[#c4c4c6]" />
      <p className="mt-[4px] flex items-center gap-1 pl-1 font-bold text-[#4a4a4e]">
        <svg viewBox="0 0 12 12" className="size-[12px]">
          <path d="M0 1h10v8H0z" fill="#f4ef8e" /><path d="M0 0h10v2H0z" fill="#2430b0" /><path d="M1 7h11v5H1z" fill="#111" /><path d="M3 10h2M6 10h2M9 10h2" stroke="#ddd" />
        </svg>
        3DORBIT
      </p>
      <p className="mt-1 pl-1 font-bold text-[#4a4a4e]">按 F1 键获得更多帮助</p>
    </div>
  );
}

function Arrow() {
  return (
    <svg viewBox="0 0 440 180" className="pointer-events-none absolute top-[70px] left-[143px] h-[180px] w-[440px]">
      <path d="M8 15 435 169M9 16 42 11M10 8 25 44" fill="none" stroke="#800016" strokeWidth="4" strokeLinecap="round" />
    </svg>
  );
}

const draw = ["line", "xline", "pline", "polygon", "rect", "arc", "circle", "cloud", "spline", "ellipse", "ellArc", "insert", "block", "point", "hatch", "gradient", "region", "table", "mtext", "addSel"];
const modify = ["erase", "mcopy", "mirror", "offset", "array", "move", "rotate", "scale", "stretch", "trim", "extend", "breakPt", "brk", "join", "chamfer", "fillet", "blend", "explode"];

const Chevron = ({ d }: { d: string }) => (
  <svg viewBox="0 0 12 12" className="size-[12px] shrink-0"><path d={d} fill="none" stroke="#444" strokeWidth="1.500" /></svg>
);

function SheetTabs() {
  return (
    <div className="flex h-[12px] shrink-0 items-center bg-[#f0f0f0] text-[9px] leading-[12px] text-[#222]">
      {["M2 2v6M8 2 4 5l4 3z", "M7 2 3 5l4 3z", "M3 2l4 3-4 3z", "M2 2l4 3-4 3zM8 2v6"].map((d) => (
        <button key={d} aria-label="切换布局" className="flex h-[10px] w-[10px] items-center border-r border-[#bbb]"><svg viewBox="0 0 10 10" className="size-[9px]"><path d={d} fill="#888" stroke="#888" strokeWidth=".8" /></svg></button>
      ))}
      <button className="ml-[2px] h-[11px] w-[33px] bg-black leading-[11px] font-bold text-white [clip-path:polygon(0_0,100%_0,88%_100%,12%_100%)]">模型</button>
      <svg viewBox="0 0 6 12" className="-ml-1 h-[12px] w-[6px]"><path d="M1 11 5 1" stroke="#555" /></svg>
      <button className="ml-px">布局1</button>
      <svg viewBox="0 0 6 12" className="ml-[3px] h-[12px] w-[6px]"><path d="M1 11 5 1" stroke="#555" /></svg>
      <button className="ml-[2px]">布局2</button>
      <svg viewBox="0 0 6 12" className="ml-[3px] h-[12px] w-[6px]"><path d="M1 11 5 1" stroke="#555" /></svg>
      <span className="flex-1" />
      <div className="flex w-[319px] items-center">
        <span className="h-[10px] w-[4px] bg-[#c4c4c4]" />
        <Chevron d="M8 3 5 6l3 3" />
        <span className="ml-[104px] h-[9px] w-[12px] bg-[#cdcdcd]" />
        <span className="flex-1" />
        <Chevron d="M4 3l3 3-3 3" />
      </div>
      <span className="w-[13px]" />
    </div>
  );
}

function Workspace() {
  return (
    <main className="flex min-h-0 flex-1">
      <aside className="ml-px w-4 shrink-0">
        <HGrip />
        <div className="bg-[#f0f0f0] pb-[2px]">{draw.map((n) => <Tool key={n} name={n} cls="h-4 w-4" />)}</div>
      </aside>
      <section className="ml-1 flex min-w-0 flex-1 flex-col border-t border-l border-[#a9a9a9]">
        <div className="flex min-h-0 flex-1">
          <div className="relative min-w-0 flex-1 overflow-hidden bg-[#23262b]">
            <div className="absolute inset-0"><Scene /></div>
            <p className="absolute top-[2px] left-[4px] text-[9px] leading-[13px] text-[#d9d9d9]">[−] [自定义视图] [线框]</p>
            <ViewCube />
            <OrbitBar />
            <Tooltip />
            <Arrow />
          </div>
          <div className="flex w-[13px] shrink-0 flex-col items-center bg-[#f0f0f0]">
            <Chevron d="M3 8l3-3 3 3" />
            <span className="min-h-0 flex-[181]" />
            <span className="h-[12px] w-[10px] bg-[#cdcdcd]" />
            <span className="min-h-0 flex-[167]" />
            <Chevron d="M3 4l3 3 3-3" />
          </div>
        </div>
        <SheetTabs />
      </section>
      <aside className="mr-[2px] ml-[5px] w-[18px] shrink-0 overflow-hidden">
        <HGrip />
        <div className="bg-[#f0f0f0] pb-[3px]">{modify.map((n) => <Tool key={n} name={n} cls="h-4 w-[17px]" />)}</div>
        <HGrip />
        <div className="bg-[#f0f0f0] pt-px">
          {["front", "back", "above", "under"].map((n) => <Tool key={n} name={n} cls="h-4 w-[17px]" />)}
          <div className="mx-[2px] my-[2px] border-t border-[#bbb]" />
          {["annot", "under"].map((n) => <Tool key={n} name={n} cls="h-4 w-[17px]" />)}
        </div>
      </aside>
    </main>
  );
}

/* ---------- command line, status bar, task bar ---------- */
const Lat = ({ children }: { children: React.ReactNode }) => (
  <span className="font-['DejaVu_Sans_Mono',monospace] text-[8px]">{children}</span>
);

function CommandLine() {
  return (
    <section className="mt-[3px] flex h-[42px] shrink-0 bg-[#a3a3a3] font-['Liberation_Mono','Noto_Sans_CJK_SC',monospace] text-[10px] text-[#222]">
      <div className="w-[12px] shrink-0 pt-[2px]"><div className="ml-px h-[3px] w-[9px] border-y border-[#777]" /></div>
      <div className="flex min-w-0 flex-1 flex-col whitespace-nowrap">
        <div className="h-[30px] bg-[#c8c8c8] pt-[2px] leading-[11px]">
          <p>命令<Lat>:</Lat> <Lat>3do</Lat></p>
          <p><Lat>3DORBIT</Lat> 按 <Lat>ESC</Lat> 或 <Lat>ENTER</Lat> 键退出，或者单击鼠标右键显示快捷菜单。</p>
        </div>
        <label className="flex h-[12px] items-center bg-white leading-[12px]">
          <span>命令<Lat>:</Lat></span>
          <input aria-label="命令" className="h-[12px] min-w-0 flex-1 bg-transparent pl-1 outline-none" />
        </label>
      </div>
    </section>
  );
}

const toggles = ["infer", "snap", "grid", "ortho", "polar", "osnap", "osnap3", "otrack", "ducs", "dyn", "lwt", "tpy", "qp", "sc"];
const active = new Set(["grid", "polar", "otrack", "tpy"]);

function StatusBar() {
  return (
    <div className="flex h-[17px] shrink-0 items-stretch border-t border-[#555] bg-linear-to-b from-[#7f7f7f] to-[#a6a6a6]">
      <p className="w-[151px] pl-[7px] font-['Liberation_Mono',monospace] text-[8px] leading-[17px] whitespace-pre text-[#111]">-599.1424, -1576.7446, 0.0000</p>
      {toggles.map((t) => (
        <button key={t} aria-label={t} aria-pressed={active.has(t)} className={`flex w-4 items-center justify-center border-r border-[#777] ${active.has(t) ? "bg-[#a9d5e6]" : "bg-[#b4b4b4]"}`}>
          <Icon name={t} size="size-[13px]" />
        </button>
      ))}
      <span className="flex-1" />
      <button className="w-[22px] border-x border-[#666] bg-[#a8a8a8] text-[9px] leading-[15px] font-medium whitespace-nowrap text-[#111]">模型</button>
      <Tool name="page" />
      <span className="w-[202px]" />
    </div>
  );
}

function TaskBar() {
  return (
    <footer className="flex h-[29px] shrink-0 bg-[#04171c]">
      <button aria-label="开始" className="flex w-[35px] items-center justify-center">
        <svg viewBox="0 0 12 12" className="size-[12px]"><path d="M0 1.700 5 1v4.600H0zM5.700.9 12 0v5.600H5.700zM0 6.400h5V11l-5-.7zM5.700 6.400H12V12l-6.300-.9z" fill="#fff" /></svg>
      </button>
      <label className="flex w-[252px] items-center bg-[#f2f2f2]">
        <span className="mr-[7px] ml-[7px] size-[15px] rounded-full border-2 border-[#1b1b1b]" />
        <input aria-label="搜索 Windows" placeholder="在这里输入你要搜索的内容" className="min-w-0 flex-1 bg-transparent text-[10px] outline-none placeholder:text-[#444]" />
        <svg viewBox="0 0 12 14" className="mr-[9px] h-[14px] w-[12px]"><path d="M4 3a2 2 0 0 1 4 0v4a2 2 0 0 1-4 0zM2 6v1.500a4 4 0 0 0 8 0V6M6 11.500V14" fill="none" stroke="#333" /></svg>
      </label>
      <button aria-label="Edge" className="ml-[5px] flex w-[30px] items-center justify-center border-b-2 border-[#7cc4d8]">
        <svg viewBox="0 0 16 16" className="size-[16px]"><path d="M1 7.500C1.500 3 4.500.5 8.300.5c4.500 0 7 3 6.700 8H5.500c.3 2.500 2 3.700 4.500 3.700 1.500 0 3-.4 4.200-1.100v3.300c-1.400.8-3 1.100-4.900 1.100C5 15.500 2.300 13 2.300 9.500c0-2.300 1.200-4 3-5C3.700 4.800 2 6 1 7.500zM5.600 6h5.200c0-1.600-.9-2.500-2.400-2.500S5.900 4.500 5.600 6z" fill="#0a78d6" /></svg>
      </button>
      <button aria-label="画图" className="ml-[5px] flex w-[30px] items-center justify-center border-b-2 border-[#7cc4d8]">
        <svg viewBox="0 0 18 18" className="size-[18px]"><path d="M1 10c0-5 5-8 10-7 5 1 5 5 2 6s1 4-2 6C7 17 1 15 1 10z" fill="#cfe3ef" stroke="#8fb1c4" strokeWidth=".7" /><circle cx="5" cy="8" r="1.500" fill="#d33" /><circle cx="9" cy="6" r="1.500" fill="#e8a020" /><circle cx="4.500" cy="11.500" r="1.500" fill="#2a8a4a" /><circle cx="8" cy="13" r="1.500" fill="#2a62c8" /><path d="M16 1l-5 12-1 4 3-3 4-12z" fill="#d58d3c" /></svg>
      </button>
      <button aria-label="AutoCAD" className="ml-[4px] flex w-[35px] items-center justify-center border-b-2 border-[#7cc4d8] bg-[#3b494d]">
        <svg viewBox="0 0 18 18" className="size-[18px]"><path d="M8 3h9v13H5z" fill="#b9bdc0" /><path d="M10 12h7v4h-7z" fill="#222" /><path d="M1 14 7 1l3 0 4 10-3 1-1-2-5 1-1 3z" fill="#d3151f" /><path d="M1 14 7 1l1 6-4 7z" fill="#f2555b" /></svg>
      </button>
    </footer>
  );
}

function Watermarks() {
  return (
    <>
      <div className="pointer-events-none absolute right-[130px] bottom-[88px] flex gap-[3px]">
        <span className="h-[18px] w-[13px] rounded-full bg-white/85" />
        <span className="h-[18px] w-[13px] rounded-full bg-white/85" />
      </div>
      <div className="pointer-events-none absolute right-[186px] bottom-[20px] w-[48px] whitespace-nowrap text-white/75">
        <p className="font-['Liberation_Sans',sans-serif] text-[42px] leading-[34px] font-bold">B<span className="text-[36px]">a</span></p>
        <p className="font-['Open_Sans',sans-serif] text-[21px] leading-[26px]">jing</p>
      </div>
      <div className="absolute right-0 bottom-0 flex h-[95px] w-[200px] items-center bg-[#222f57] text-[#d2d3d6]">
        <svg viewBox="572 118 138 178" className="ml-[12px] h-[60px] w-[46px] shrink-0">
          <path d="M583 142 599 151Q604 143 611 142L614 156 633 160Q630 172 616 171 604 192 622 207 648 216 678 218 692 222 691 238L683 252 693 291 681 294 670 264Q648 240 614 246L607 294 595 294 600 246Q578 228 577 204 579 186 594 171L596 158Z" fill="#cfd0d2" />
          <path d="M614 146Q640 162 668 154 690 148 705 130M614 146 613 132M622 149Q614 136 624 124M634 152Q626 138 636 126M646 153Q650 138 642 132M646 138Q656 144 668 136L672 126M655 150Q678 150 684 134" fill="none" stroke="#cfd0d2" strokeWidth="4" />
        </svg>
        <div className="ml-[6px] pt-1 whitespace-nowrap">
          <p className="flex items-center font-['Noto_Sans_CJK_SC',sans-serif] text-[28px] leading-[36px] font-medium">
            <span className="font-['Roboto',sans-serif] text-[36px] font-normal">3D</span>溜溜网
          </p>
          <p className="font-['Inter',sans-serif] text-[24px] leading-[26px]">3D66.COM</p>
        </div>
      </div>
    </>
  );
}

export default function App() {
  return (
    <div className={`relative flex h-screen flex-col overflow-hidden bg-[#686868] ${ui}`}>
      <Header />
      <Toolbars />
      <Workspace />
      <CommandLine />
      <StatusBar />
      <TaskBar />
      <Watermarks />
    </div>
  );
}
